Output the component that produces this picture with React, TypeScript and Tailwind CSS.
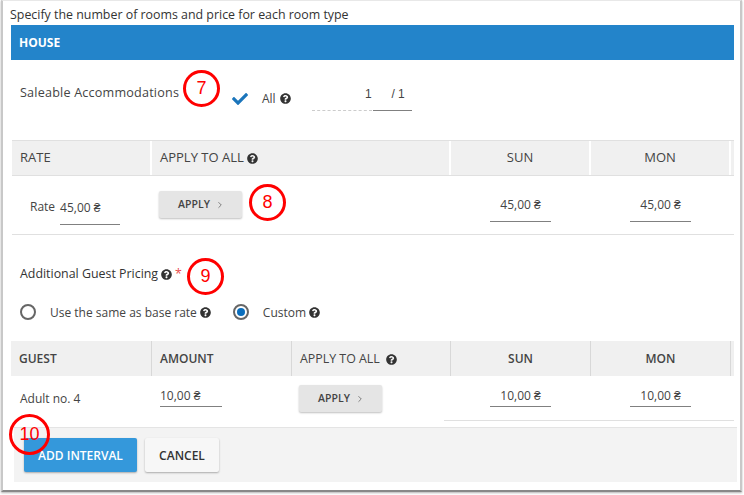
import React from 'react';
import { FaCheck, FaQuestionCircle } from 'react-icons/fa';
import { ChevronRight } from 'lucide-react';

const Help = ({ className = '' }: { className?: string }) => (
  <FaQuestionCircle className={`inline-block text-[11px] text-[#333] ${className}`} />
);

const Marker = ({ label, className }: { label: string; className: string }) => (
  <div
    className={`absolute flex items-center justify-center rounded-full border-[3px] border-[#f00] text-[#f00] text-[18px] bg-transparent ${className}`}
    style={{ fontFamily: '"Liberation Sans", sans-serif' }}
  >
    {label}
  </div>
);

const ApplyButton = () => (
  <button className="flex items-center justify-center gap-[5px] pl-[2px] w-[83px] h-[27px] bg-[#e5e5e5] rounded-[2px] shadow-[0_1px_2px_rgba(0,0,0,0.25)] text-[10.5px] font-semibold text-[#444]">
    APPLY <ChevronRight size={10} strokeWidth={1.5} />
  </button>
);

const PriceInput = ({ value, className }: { value: string; className: string }) => (
  <div className={`w-[61px] border-b border-[#808080] text-center text-[12px] text-[#444] leading-[16px] ${className}`}>
    {value} ₴
  </div>
);

const HeadCell = ({ className = '', children }: { className?: string; children: React.ReactNode }) => (
  <div className={`flex items-center shrink-0 h-full ${className}`}>{children}</div>
);

export default function App() {
  return (
    <div
      className="relative w-[744px] h-[495px] bg-white overflow-hidden text-[#444]"
      style={{ fontFamily: '"Open Sans", sans-serif' }}
    >
      <div className="ml-[1px] w-[741px] h-[492px] border-l-2 border-r-2 border-b-2 border-t border-l-[#c8c8c8] border-r-[#c8c8c8] border-t-[#e8e8e8] border-b-[#888] shadow-[0_1px_2px_rgba(0,0,0,0.3)]">
        {/* title */}
        <div className="h-[24px] pl-[7px] pt-[6px] text-[12.4px] leading-[16px] text-[#333]">
          Specify the number of rooms and price for each room type
        </div>

        {/* room type bar */}
        <div className="ml-[8px] w-[723px] h-[35px] bg-[#2384ca] flex items-center pl-[8px] text-[12px] font-bold text-white">
          HOUSE
        </div>

        {/* saleable accommodations */}
        <div className="relative h-[80px] flex ml-[17px]">
          <span className="mt-[24px] text-[12.6px] leading-[18px] text-[#444] tracking-[0.2px] w-[212px] shrink-0">
            Saleable Accommodations
          </span>
          <FaCheck className="mt-[31px] text-[16px] text-[#1b75bb] shrink-0" />
          <span className="ml-[14px] mt-[31px] text-[12px] leading-[16px] shrink-0">
            All <Help className="ml-[1px] -mt-[2px]" />
          </span>
          <div className="ml-[21px] mt-[25px] w-[60px] h-[26px] border-b border-dashed border-[#ccc] text-right text-[12px] shrink-0" style={{ fontFamily: '"Liberation Sans", sans-serif' }}>
            1
          </div>
          <div className="ml-[1px] mt-[25px] w-[39px] h-[26px] border-b border-[#808080] text-right pr-[7px] text-[12px] shrink-0" style={{ fontFamily: '"Liberation Sans", sans-serif' }}>
            / 1
          </div>
        </div>

        {/* rate table */}
        <div className="ml-[9px] w-[722px]">
          <div className="flex h-[36px] bg-[#f0f0f0] border-t border-b border-[#e0e0e0] text-[13px] text-[#444]">
            <HeadCell className="w-[140px] pl-[8px] border-r-2 border-white">RATE</HeadCell>
            <HeadCell className="w-[299px] pl-[8px] border-r-2 border-white">
              APPLY TO ALL <Help className="ml-[3px]" />
            </HeadCell>
            <HeadCell className="w-[140px] justify-center border-r-2 border-white">SUN</HeadCell>
            <HeadCell className="w-[140px] justify-center border-r-2 border-white">MON</HeadCell>
          </div>
          <div className="flex h-[59px] border-b border-[#e0e0e0] text-[12px]">
            <div className="w-[140px] shrink-0 flex pl-[18px]">
              <span className="mt-[22px] leading-[18px] text-[12px]">Rate</span>
              <div className="ml-[5px] mt-[15px] w-[60px] h-[34px] border-b border-[#808080] pt-[9px] leading-[16px]">45,00 ₴</div>
            </div>
            <div className="w-[299px] shrink-0 pl-[7px] pt-[15px]">
              <ApplyButton />
            </div>
            <div className="w-[140px] shrink-0 flex pl-[39px] pt-[20px]">
              <PriceInput value="45,00" className="h-[26px] pt-[1px]" />
            </div>
            <div className="w-[140px] shrink-0 flex pl-[39px] pt-[20px]">
              <PriceInput value="45,00" className="h-[26px] pt-[1px]" />
            </div>
          </div>
        </div>

        {/* additional guest pricing */}
        <div className="h-[106px] ml-[17px] pt-[30px]">
          <div className="h-[18px] flex items-center text-[12.4px] font-medium text-[#333]">
            Additional Guest Pricing <Help className="ml-[3px]" />
            <span className="ml-[3px] text-[#e94b4b]">*</span>
          </div>
          <div className="mt-[20px] flex items-center h-[18px] text-[12px] text-[#444]">
            <span className="w-[16px] h-[16px] rounded-full border-2 border-[#666] shrink-0" />
            <span className="ml-[14px] pt-[1px]">Use the same as base rate</span>
            <Help className="ml-[3px]" />
            <span className="ml-[22px] w-[16px] h-[16px] rounded-full border-2 border-[#666] shrink-0 flex items-center justify-center">
              <span className="w-[8px] h-[8px] rounded-full bg-[#0a6ebd]" />
            </span>
            <span className="ml-[14px] pt-[1px]">Custom</span>
            <Help className="ml-[3px]" />
          </div>
        </div>

        {/* guest table */}
        <div className="ml-[8px] w-[723px]">
          <div className="flex h-[35px] bg-[#f0f0f0] text-[12px] font-semibold text-[#444]">
            <HeadCell className="w-[141px] pl-[8px] border-r border-[#d8d8d8]">GUEST</HeadCell>
            <HeadCell className="w-[140px] pl-[8px] border-r border-[#d8d8d8]">AMOUNT</HeadCell>
            <HeadCell className="w-[159px] pl-[8px] pt-[1px] border-r border-[#d8d8d8] font-normal text-[12.4px]">
              APPLY TO ALL <Help className="ml-[6px]" />
            </HeadCell>
            <HeadCell className="w-[140px] justify-center border-r border-[#d8d8d8]">SUN</HeadCell>
            <HeadCell className="w-[140px] justify-center border-r border-[#d8d8d8]">MON</HeadCell>
          </div>
          <div className="flex h-[45px] text-[12px]">
            <div className="w-[141px] shrink-0 pl-[9px] pt-[14px] leading-[18px]">Adult no. 4</div>
            <div className="w-[140px] shrink-0 pl-[8px] pt-[11px]">
              <div className="w-[62px] h-[20px] pt-[1px] border-b border-[#808080] leading-[16px]">10,00 ₴</div>
            </div>
            <div className="w-[152px] shrink-0 pl-[7px] pt-[9px]">
              <ApplyButton />
            </div>
            <div className="flex-1 flex pl-[46px] pt-[11px] border-b border-[#e0e0e0] h-[45px]">
              <PriceInput value="10,00" className="h-[20px] pt-[1px]" />
              <div className="ml-[79px]">
                <PriceInput value="10,00" className="h-[20px] pt-[1px]" />
              </div>
            </div>
          </div>
        </div>

        {/* footer */}
        <div className="mt-[6px] ml-[11px] w-[723px] h-[55px] bg-[#f3f3f3] border-t border-[#e4e4e4] flex items-start gap-[8px] pl-[10px] pt-[10px]">
          <button className="w-[113px] h-[34px] pt-[1px] bg-[#3498db] rounded-[2px] shadow-[0_1px_2px_rgba(0,0,0,0.3)] text-[12px] font-semibold text-white">
            ADD INTERVAL
          </button>
          <button className="w-[74px] h-[34px] pt-[1px] bg-[#f7f7f7] rounded-[2px] shadow-[0_1px_2px_rgba(0,0,0,0.3)] text-[12px] font-semibold text-[#333]">
            CANCEL
          </button>
        </div>
      </div>

      {/* annotation markers */}
      <Marker label="7" className="left-[183px] top-[70px] w-[37px] h-[37px]" />
      <Marker label="8" className="left-[249px] top-[184px] w-[37px] h-[37px]" />
      <Marker label="9" className="left-[187px] top-[258px] w-[37px] h-[37px]" />
      <Marker label="10" className="left-[9px] top-[414px] w-[41px] h-[41px]" />
    </div>
  );
}
